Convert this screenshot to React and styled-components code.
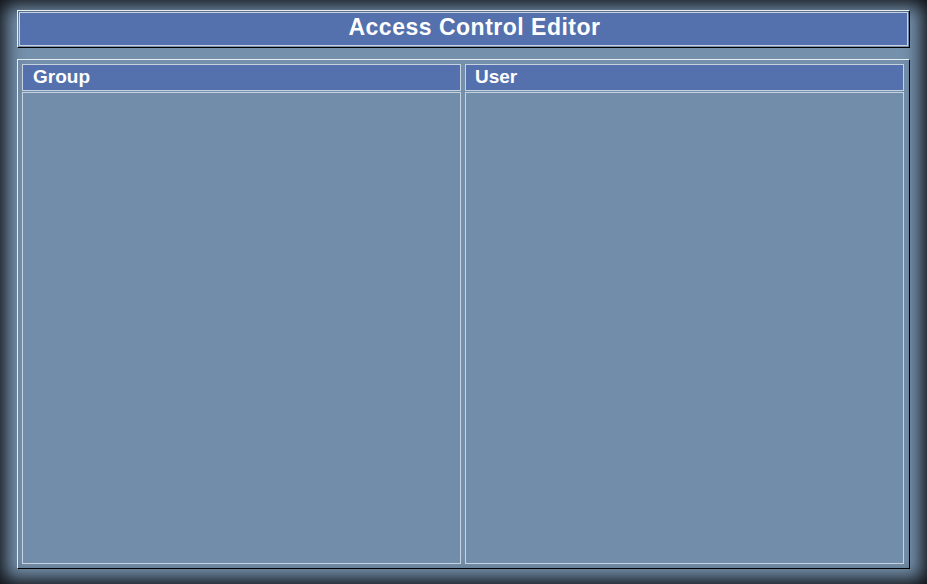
import React from "react";
import styled, { createGlobalStyle } from "styled-components";

const GlobalStyle = createGlobalStyle`
  html, body {
    margin: 0;
    padding: 0;
    background: #7590ab;
  }
  * { box-sizing: border-box; }
`;

const Screen = styled.div`
  width: 927px;
  height: 584px;
  background: #7590ab;
  box-shadow: inset 0 0 18px 5px rgba(0, 0, 0, 0.9);
  padding: 10px 17px 15px 17px;
  display: flex;
  flex-direction: column;
  gap: 11px;
  font-family: "Liberation Sans", Arial, sans-serif;
`;

const Frame = styled.div`
  border-top: 1px solid #e6ecf3;
  border-left: 1px solid #e6ecf3;
  border-right: 1px solid #000;
  border-bottom: 1px solid #000;
  padding: ${(p) => p.$pad || "1px"};
  width: 893px;
`;

const TitleBar = styled.div`
  height: 34px;
  background: #5470ad;
  border: 1px solid #c6d2e2;
  color: #fff;
  font-weight: bold;
  font-size: 23px;
  letter-spacing: 0.5px;
  display: flex;
  align-items: center;
  justify-content: center;
  padding: 0 0 3px 22px;
`;

const Main = styled(Frame)`
  flex: 1;
  display: grid;
  grid-template-columns: 439px 439px;
  column-gap: 4px;
`;

const Panel = styled.div`
  display: flex;
  flex-direction: column;
  gap: 1px;
`;

const PanelHeader = styled.div`
  height: 27px;
  background: #5470ad;
  border: 1px solid #c6d2e2;
  color: #fff;
  font-weight: bold;
  font-size: 19px;
  display: flex;
  align-items: center;
  padding-left: ${(p) => p.$indent || 10}px;
  padding-bottom: 1px;
`;

const PanelBody = styled.div`
  flex: 1;
  background: #728daa;
  border: 1px solid #c6d2e2;
`;

export default function App() {
  return (
    <>
      <GlobalStyle />
      <Screen>
        <Frame>
          <TitleBar>Access Control Editor</TitleBar>
        </Frame>
        <Main $pad="4px 5px 4px 4px">
          <Panel>
            <PanelHeader>Group</PanelHeader>
            <PanelBody />
          </Panel>
          <Panel>
            <PanelHeader $indent={9}>User</PanelHeader>
            <PanelBody />
          </Panel>
        </Main>
      </Screen>
    </>
  );
}
